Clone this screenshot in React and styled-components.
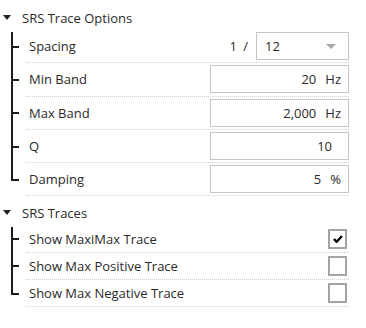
import React from 'react'
import styled, { createGlobalStyle } from 'styled-components'

const GlobalStyle = createGlobalStyle`
  html, body {
    margin: 0;
    padding: 0;
    background: #ffffff;
  }
  body {
    font-family: 'Open Sans', 'Noto Sans', 'Liberation Sans', sans-serif;
    font-size: 13px;
    font-weight: 400;
    color: #2a2a2a;
  }
`

const Panel = styled.div`
  width: 366px;
  height: 328px;
  box-sizing: border-box;
  padding: 5px 17px 0 0;
  display: flex;
  flex-direction: column;
  gap: 4px;
`

const Section = styled.div`
  display: flex;
  flex-direction: column;
`

const Header = styled.div`
  height: 25px;
  display: flex;
  align-items: center;
  gap: 11px;
  padding-left: 3px;
`

const Caret = styled.svg`
  width: 8px;
  height: 5px;
  fill: #222;
  flex: none;
`

const Row = styled.div`
  height: ${p => p.$h}px;
  display: flex;
  align-items: stretch;
`

const Branch = styled.div`
  position: relative;
  width: 26px;
  flex: none;

  &::before {
    content: '';
    position: absolute;
    left: 11px;
    top: ${p => (p.$first ? '2px' : '0')};
    width: 2px;
    bottom: ${p => (p.$last ? 'calc(50% - 1px)' : '0')};
    background: #1c1c1c;
  }

  &::after {
    content: '';
    position: absolute;
    left: 11px;
    top: calc(50% - 1px);
    width: 8px;
    height: 2px;
    background: #1c1c1c;
  }
`

const Cell = styled.div`
  flex: 1;
  display: flex;
  align-items: center;
  padding-left: 3px;
  border-bottom: 1px dotted #cfcfcf;
`

const Label = styled.span`
  flex: 1;
  white-space: nowrap;
`

const Ratio = styled.span`
  margin-right: 8px;
  word-spacing: 3px;
`

const Field = styled.div`
  box-sizing: border-box;
  width: ${p => p.$w}px;
  height: 28px;
  border: 1px solid #c6c6c6;
  display: flex;
  align-items: center;
  justify-content: ${p => (p.$select ? 'space-between' : 'flex-end')};
  padding: ${p => (p.$select ? '0 12px 0 8px' : `0 ${p.$pr}px 0 8px`)};
  background: #fff;
`

const Unit = styled.span`
  margin-left: 9px;
`

const Check = styled.div`
  box-sizing: border-box;
  width: 19px;
  height: 20px;
  margin-right: 2px;
  border: 2px solid #a4a4a4;
  display: flex;
  align-items: center;
  justify-content: center;
  background: #fff;
`

const Arrow = () => (
  <svg width='10' height='5' viewBox='0 0 10 5'>
    <path d='M0 0h10L5 5z' fill='#a8a8a8' />
  </svg>
)

const Tick = () => (
  <svg width='10' height='8' viewBox='0 0 10 8'>
    <path d='M1 4l2.6 2.8L9 1' fill='none' stroke='#000' strokeWidth='2.4' />
  </svg>
)

const options = [
  { label: 'Spacing', kind: 'spacing' },
  { label: 'Min Band', value: '20', unit: 'Hz' },
  { label: 'Max Band', value: '2,000', unit: 'Hz' },
  { label: 'Q', value: '10' },
  { label: 'Damping', value: '5', unit: '%' }
]

const traces = [
  { label: 'Show MaxiMax Trace', checked: true },
  { label: 'Show Max Positive Trace', checked: false },
  { label: 'Show Max Negative Trace', checked: false }
]

const SectionHeader = ({ title }) => (
  <Header>
    <Caret viewBox='0 0 8 5'>
      <path d='M0 0h8L4 5z' />
    </Caret>
    <span>{title}</span>
  </Header>
)

export default function App () {
  return (
    <>
      <GlobalStyle />
      <Panel>
        <Section>
          <SectionHeader title='SRS Trace Options' />
          {options.map((o, i) => (
            <Row key={o.label} $h={33.3}>
              <Branch $first={i === 0} $last={i === options.length - 1} />
              <Cell>
                <Label>{o.label}</Label>
                {o.kind === 'spacing'
                  ? (
                    <>
                      <Ratio>1 /</Ratio>
                      <Field $w={93} $select>
                        <span>12</span>
                        <Arrow />
                      </Field>
                    </>
                    )
                  : (
                    <Field $w={139} $pr={o.unit ? 7 : 16}>
                      <span>{o.value}</span>
                      {o.unit && <Unit>{o.unit}</Unit>}
                    </Field>
                    )}
              </Cell>
            </Row>
          ))}
        </Section>
        <Section>
          <SectionHeader title='SRS Traces' />
          {traces.map((t, i) => (
            <Row key={t.label} $h={27.3}>
              <Branch $first={i === 0} $last={i === traces.length - 1} />
              <Cell>
                <Label>{t.label}</Label>
                <Check>{t.checked && <Tick />}</Check>
              </Cell>
            </Row>
          ))}
        </Section>
      </Panel>
    </>
  )
}
